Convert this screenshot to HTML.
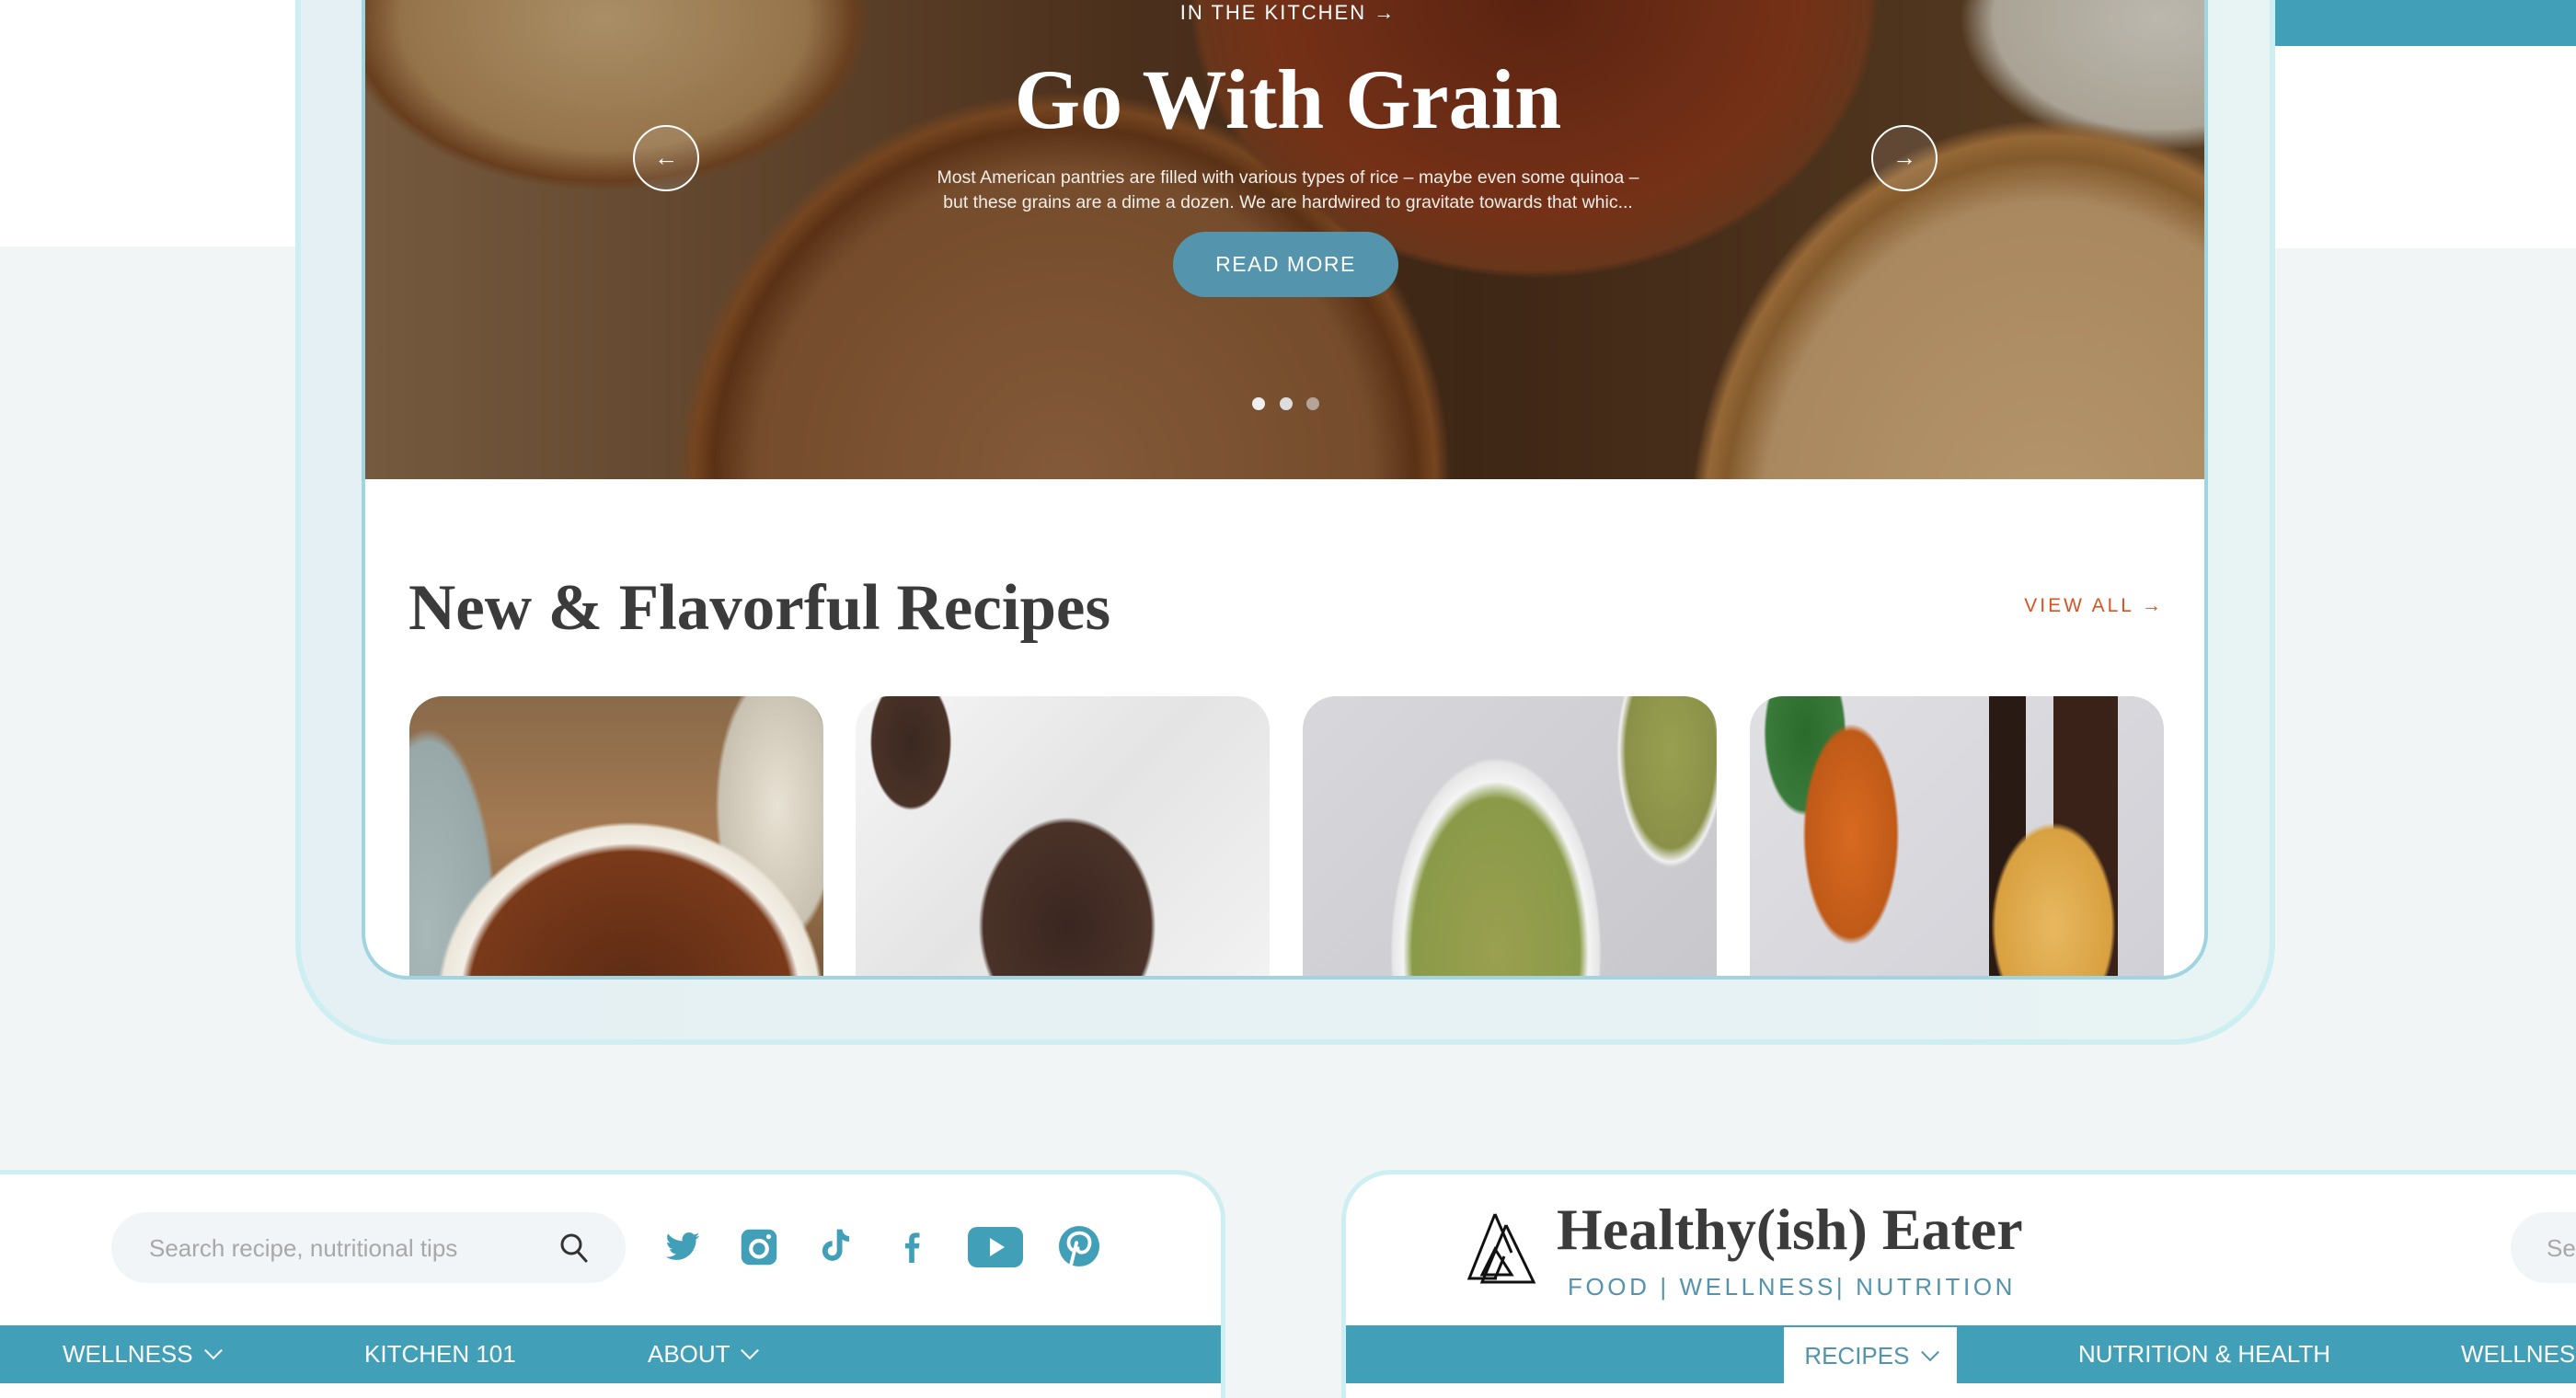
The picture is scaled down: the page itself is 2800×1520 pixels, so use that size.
<!DOCTYPE html>
<html style="overflow:hidden;height:1520px"><head><meta charset="utf-8"><style>
*{margin:0;padding:0;box-sizing:border-box}
body{width:2800px;height:1520px;position:relative;overflow:hidden;background:#f1f5f6;font-family:"Liberation Sans",sans-serif}
.abs{position:absolute}
.serif{font-family:"Liberation Serif","DejaVu Serif",serif;font-weight:bold}
</style></head><body>
<div class="abs" style="left:0;top:0;width:322px;height:268px;background:#fff"></div>
<div class="abs" style="left:2472px;top:0;width:328px;height:270px;background:#fff"></div>
<div class="abs" style="left:2473px;top:0;width:327px;height:50px;background:#419fb8"></div>

<div class="abs" style="left:321px;top:-120px;width:2152px;height:1256px;border:6px solid #cdeff2;border-radius:0 0 110px 110px;background:linear-gradient(90deg,#e4f0f3,#e8f3f4)"></div>
<div class="abs" style="left:393px;top:-60px;width:2007px;height:1125px;border:4px solid #9fd4e0;border-top:none;border-radius:0 0 50px 50px;background:#fff;overflow:hidden">
  <div class="abs" style="left:0;top:60px;width:2000px;height:521px;background:
  radial-gradient(ellipse 520px 420px at 1270px 0px,#6a2a14 0%,#8a3a1c 55%,#7a4020 70%,transparent 72%),
  radial-gradient(ellipse 400px 260px at 260px 20px,#c8a878 0%,#b08858 55%,#7a4a24 68%,transparent 72%),
  radial-gradient(ellipse 560px 560px at 760px 520px,#9a6a44 0%,#8a5a34 60%,#6a3a1a 68%,#8a5226 72%,transparent 75%),
  radial-gradient(ellipse 520px 600px at 1830px 580px,#d4b080 0%,#c8a070 60%,#9a6a34 68%,#b07a40 72%,transparent 75%),
  radial-gradient(ellipse 300px 200px at 1950px 20px,#ddd8cc 0%,#c8c0b0 60%,transparent 72%),
  linear-gradient(90deg,#8a6a4a,#5a3a22 40%,#4a2e1a 60%,#6a4a2a)"></div>
  <div class="abs" style="left:0;top:60px;width:2000px;height:521px;background:rgba(0,0,0,0.15)"></div>
</div>

<div class="abs" style="left:1100px;top:0;width:600px;text-align:center;color:#fff;font-size:22px;letter-spacing:2px;line-height:28px">IN THE KITCHEN →</div>
<div class="abs serif" style="left:900px;top:48px;width:1000px;text-align:center;color:#fff;font-size:92px;line-height:120px">Go With Grain</div>
<div class="abs" style="left:900px;top:180px;width:1000px;text-align:center;color:#f3eee8;font-size:19.5px;line-height:27px">Most American pantries are filled with various types of rice – maybe even some quinoa –<br>but these grains are a dime a dozen. We are hardwired to gravitate towards that whic...</div>
<div class="abs" style="left:1275px;top:252px;width:245px;height:71px;border-radius:36px;background:#5494ac;color:#fff;font-size:23px;letter-spacing:1.5px;line-height:71px;text-align:center">READ MORE</div>
<div class="abs" style="left:688px;top:136px;width:72px;height:72px;border:2px solid #fff;border-radius:50%;background:rgba(255,255,255,0.1);color:#fff;font-size:26px;line-height:66px;text-align:center">←</div>
<div class="abs" style="left:2034px;top:136px;width:72px;height:72px;border:2px solid #fff;border-radius:50%;background:rgba(255,255,255,0.1);color:#fff;font-size:26px;line-height:66px;text-align:center">→</div>
<div class="abs" style="left:1361px;top:432px;width:14px;height:14px;border-radius:50%;background:#eee"></div>
<div class="abs" style="left:1391px;top:432px;width:14px;height:14px;border-radius:50%;background:#ddd"></div>
<div class="abs" style="left:1420px;top:432px;width:14px;height:14px;border-radius:50%;background:rgba(220,220,220,0.6)"></div>

<div class="abs serif" style="left:444px;top:618px;color:#3b3b3b;font-size:71px;line-height:86px">New &amp; Flavorful Recipes</div>
<div class="abs" style="left:2150px;top:646px;width:202px;text-align:right;color:#d9521f;font-size:21px;letter-spacing:3px;line-height:26px">VIEW ALL →</div>

<div class="abs" style="left:445px;top:757px;width:450px;height:304px;border-radius:36px 36px 0 0;overflow:hidden;background:
radial-gradient(ellipse 250px 230px at 240px 330px,#5a2a14 0%,#7a3a1a 70%,#f3efe6 74%,#ece6da 82%,transparent 84%),
radial-gradient(ellipse 90px 200px at 400px 120px,#e8e2d4 0%,#c8c0b0 70%,transparent 75%),
radial-gradient(ellipse 100px 300px at 20px 260px,#a8b8b8 0%,#98a8a8 70%,transparent 75%),
linear-gradient(#8a6a4a,#a47a52 50%,#7a5a3a)"></div>
<div class="abs" style="left:930px;top:757px;width:450px;height:304px;border-radius:36px 36px 0 0;overflow:hidden;background:
radial-gradient(ellipse 130px 160px at 230px 250px,#3a2620 0%,#4a3228 70%,transparent 74%),
radial-gradient(ellipse 60px 100px at 60px 50px,#3a2820 0%,#4a3228 70%,transparent 74%),
linear-gradient(135deg,#f6f6f6,#e4e4e4 50%,#f2f2f2)"></div>
<div class="abs" style="left:1416px;top:757px;width:450px;height:304px;border-radius:36px 36px 0 0;overflow:hidden;background:
radial-gradient(ellipse 140px 260px at 210px 280px,#9aa050 0%,#8a9a48 65%,#f4f4f4 72%,#e6e6e6 80%,transparent 82%),
radial-gradient(ellipse 70px 150px at 400px 60px,#9aa050 0%,#8a9048 70%,#f0f0f0 80%,transparent 84%),
linear-gradient(135deg,#d8d8dc,#c8c8cc)"></div>
<div class="abs" style="left:1902px;top:757px;width:450px;height:304px;border-radius:36px 36px 0 0;overflow:hidden;background:
radial-gradient(ellipse 90px 150px at 330px 250px,#e8b860 0%,#d8a040 70%,transparent 75%),
radial-gradient(ellipse 70px 160px at 110px 150px,#d86a20 0%,#c05a18 70%,transparent 75%),
radial-gradient(ellipse 60px 120px at 60px 40px,#2a6a2a 0%,#3a7a3a 70%,transparent 75%),
linear-gradient(90deg,transparent 260px,#2a1a14 260px,#2a1a14 300px,transparent 300px,transparent 330px,#3a2218 330px,#3a2218 400px,transparent 400px),
linear-gradient(135deg,#e0e0e4,#d0d0d6)"></div>

<div class="abs" style="left:-60px;top:1272px;width:1392px;height:260px;border:5px solid #cdeff2;border-bottom:none;border-radius:0 54px 0 0;background:#fff"></div>
<div class="abs" style="left:121px;top:1318px;width:559px;height:77px;border-radius:39px;background:#f1f5f7"></div>
<div class="abs" style="left:162px;top:1340px;color:#a8a8a8;font-size:26px;line-height:34px">Search recipe, nutritional tips</div>
<svg class="abs" style="left:608px;top:1340px" width="32" height="34" viewBox="0 0 32 34"><circle cx="13" cy="13" r="10" fill="none" stroke="#333" stroke-width="3"/><path d="M20 21l9 10" stroke="#333" stroke-width="3" stroke-linecap="round"/></svg>
<svg class="abs" style="left:720px;top:1336px" width="44" height="40" viewBox="0 0 24 24"><path fill="#419fb8" d="M23 4.6a9 9 0 0 1-2.6.7 4.5 4.5 0 0 0 2-2.5 9 9 0 0 1-2.9 1.1A4.5 4.5 0 0 0 11.8 8 12.8 12.8 0 0 1 2.5 3.3a4.5 4.5 0 0 0 1.4 6 4.5 4.5 0 0 1-2-.6 4.5 4.5 0 0 0 3.6 4.5 4.5 4.5 0 0 1-2 .1 4.5 4.5 0 0 0 4.2 3.1A9 9 0 0 1 1 18.3 12.8 12.8 0 0 0 7.9 20.3c8.3 0 12.8-6.9 12.8-12.8v-.6A9 9 0 0 0 23 4.6z"/></svg>
<svg class="abs" style="left:804px;top:1334px" width="42" height="44" viewBox="0 0 24 24"><rect x="1" y="1" width="22" height="22" rx="5" fill="#419fb8"/><circle cx="12" cy="13" r="5" fill="none" stroke="#fff" stroke-width="2.4"/><circle cx="18" cy="5.5" r="1.5" fill="#fff"/></svg>
<svg class="abs" style="left:888px;top:1332px" width="40" height="46" viewBox="0 0 24 24"><path fill="#419fb8" d="M13 1h3.5c.3 2.6 1.9 4.3 4.5 4.5v3.5c-1.7 0-3.2-.5-4.5-1.4v7.4a6.5 6.5 0 1 1-6.5-6.5v3.6a3 3 0 1 0 3 3z"/></svg>
<svg class="abs" style="left:974px;top:1332px" width="34" height="48" viewBox="0 0 24 24"><path fill="#419fb8" d="M14 24v-11h3.5l.5-4h-4V6.5c0-1.1.3-1.9 1.9-1.9H18V1.1A29 29 0 0 0 15 1c-3 0-5 1.8-5 5.1V9H7v4h3v11z"/></svg>
<svg class="abs" style="left:1052px;top:1334px" width="60" height="44" viewBox="0 0 30 22"><rect x="0" y="0" width="30" height="22" rx="5" fill="#419fb8"/><path d="M12 6l8 5-8 5z" fill="#fff"/></svg>
<svg class="abs" style="left:1150px;top:1332px" width="46" height="46" viewBox="0 0 24 24"><circle cx="12" cy="12" r="11.5" fill="#419fb8"/><path fill="none" stroke="#fff" stroke-width="2" stroke-linecap="round" d="M10.5 10l-3 12M8 14c-1.5-1-2-2.5-2-4 0-3.5 3-5.5 6.2-5.5s5.8 2.2 5.8 5.3c0 3.3-2 5.7-4.6 5.7-1.5 0-2.5-1-2.2-2.3"/></svg>
<div class="abs" style="left:0;top:1441px;width:1327px;height:63px;background:#429fb8;color:#fff;font-size:26px;line-height:63px">
 <span class="abs" style="left:68px">WELLNESS <span style="display:inline-block;width:14px;height:14px;border-right:2.5px solid #fff;border-bottom:2.5px solid #fff;transform:rotate(45deg) translate(-4px,-4px);margin-left:8px"></span></span>
 <span class="abs" style="left:396px">KITCHEN 101</span>
 <span class="abs" style="left:704px">ABOUT <span style="display:inline-block;width:14px;height:14px;border-right:2.5px solid #fff;border-bottom:2.5px solid #fff;transform:rotate(45deg) translate(-4px,-4px);margin-left:8px"></span></span>
</div>

<div class="abs" style="left:1458px;top:1272px;width:1342px;height:260px;border:5px solid #cdeff2;border-right:none;border-bottom:none;border-radius:54px 0 0 0;background:#fff"></div>
<svg class="abs" style="left:1595px;top:1318px" width="90" height="80" viewBox="0 0 90 80"><g fill="none" stroke="#111" stroke-width="3"><path d="M30 2L2 72h30"/><path d="M30 2l18 42"/><path d="M42 14L16 76h36"/><path d="M42 14l30 62H52"/><path d="M30 40l-14 28h32z"/><path d="M40 48L30 72"/></g></svg>
<div class="abs serif" style="left:1692px;top:1301px;color:#3b3b3b;font-size:64px;line-height:72px">Healthy(ish) Eater</div>
<div class="abs" style="left:1704px;top:1382px;color:#5393ad;font-size:26px;letter-spacing:3.6px;line-height:34px">FOOD | WELLNESS| NUTRITION</div>
<div class="abs" style="left:2729px;top:1318px;width:200px;height:77px;border-radius:39px;background:#f1f5f7"></div>
<div class="abs" style="left:2768px;top:1340px;color:#a8a8a8;font-size:26px;line-height:34px">Se</div>
<div class="abs" style="left:1463px;top:1441px;width:1337px;height:63px;background:#429fb8;color:#fff;font-size:26px;line-height:63px">
 <div class="abs" style="left:476px;top:2px;width:188px;height:63px;background:#fff;color:#5393ad;text-align:center">RECIPES <span style="display:inline-block;width:14px;height:14px;border-right:2.5px solid #5393ad;border-bottom:2.5px solid #5393ad;transform:rotate(45deg) translate(-4px,-4px);margin-left:8px"></span></div>
 <span class="abs" style="left:796px">NUTRITION &amp; HEALTH</span>
 <span class="abs" style="left:1212px">WELLNESS</span>
</div>
</body></html>
